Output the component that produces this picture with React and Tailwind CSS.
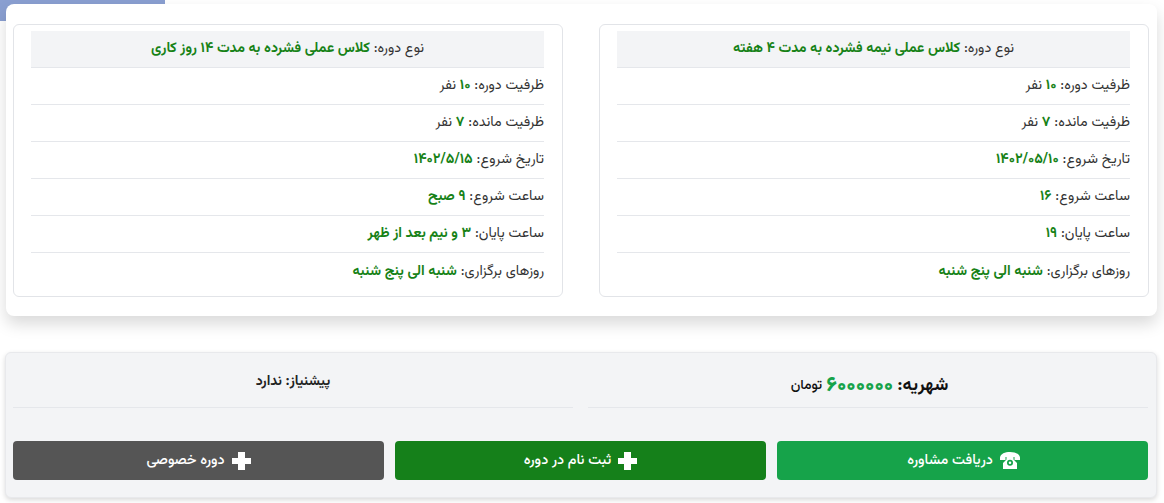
import React from "react";

const FONT = "font-['Vazirmatn','Noto_Sans_Arabic','DejaVu_Sans',sans-serif]";

const courses = [
  {
    type: "کلاس عملی نیمه فشرده به مدت ۴ هفته",
    rows: [
      ["ظرفیت دوره:", "۱۰", " نفر"],
      ["ظرفیت مانده:", "۷", " نفر"],
      ["تاریخ شروع:", "۱۴۰۲/۰۵/۱۰", ""],
      ["ساعت شروع:", "۱۶", ""],
      ["ساعت پایان:", "۱۹", ""],
      ["روزهای برگزاری:", "شنبه الی پنج شنبه", ""],
    ],
  },
  {
    type: "کلاس عملی فشرده به مدت ۱۴ روز کاری",
    rows: [
      ["ظرفیت دوره:", "۱۰", " نفر"],
      ["ظرفیت مانده:", "۷", " نفر"],
      ["تاریخ شروع:", "۱۴۰۲/۵/۱۵", ""],
      ["ساعت شروع:", "۹ صبح", ""],
      ["ساعت پایان:", "۳ و نیم بعد از ظهر", ""],
      ["روزهای برگزاری:", "شنبه الی پنج شنبه", ""],
    ],
  },
];

const PlusIcon = () => (
  <svg viewBox="0 0 19 18" className="w-[19px] h-[18px] fill-white">
    <path d="M6 0h7v6h6v6h-6v6H6v-6H0V6h6z" />
  </svg>
);

const PhoneIcon = () => (
  <svg viewBox="0 0 20 17" className="w-5 h-[17px] fill-white">
    <path d="M0 5.500C0.500 1.800 5 0 10 0s9.500 1.800 10 5.500V8h-5.500V5H5.500v3H0z" />
    <path
      fillRule="evenodd"
      d="M6.500 5h7v2.500L17 11v6H3v-6l3.500-3.500zM10 7.800a3 3 0 1 0 0 6 3 3 0 0 0 0-6zm0 1.700a1.300 1.300 0 1 1 0 2.600 1.300 1.300 0 0 1 0-2.600z"
    />
  </svg>
);

function CourseCard({ course }) {
  return (
    <div className="w-[550px] h-[273px] border border-[#e2e4e8] rounded-md pl-[17px] pr-[18px] pt-[6px] bg-white">
      <div className="h-[37px] flex items-center justify-center bg-[#f3f4f6] border-b border-[#e5e7eb] text-[14.2px] text-[#333]">
        <span>
          نوع دوره: <b className="text-[#178217] font-bold">{course.type}</b>
        </span>
      </div>
      {course.rows.map((row, i) => (
        <div
          key={i}
          className={
            i < 5
              ? "h-[37px] flex items-center border-b border-[#e5e7eb] text-[14.2px] text-[#333]"
              : "h-[37px] flex items-center text-[14.2px] text-[#333]"
          }
        >
          <span>
            {row[0]} <b className="text-[#178217] font-bold">{row[1]}</b>
            {row[2]}
          </span>
        </div>
      ))}
    </div>
  );
}

export default function App() {
  return (
    <div dir="rtl" className={`${FONT} relative w-[1164px] h-[503px] overflow-hidden bg-white`}>
      {/* blue tab peeking out behind the card */}
      <div className="absolute left-0 top-0 w-[165px] h-[21px] bg-[#8a9fd1] rounded-br-[14px]" />

      <div className="relative mt-[4px] mr-[7px] w-[1151px] h-[312px] bg-white rounded-lg shadow-[0_8px_16px_rgba(0,0,0,0.15)] pt-[20px] pr-[8px] pl-[7px]">
        <div className="flex justify-between">
          {courses.map((c, i) => (
            <CourseCard key={i} course={c} />
          ))}
        </div>
      </div>

      <div className="mt-[36px] mr-[7px] w-[1152px] h-[146px] bg-[#f3f4f6] border border-[#e8e9ec] rounded-md shadow-[0_2px_5px_rgba(0,0,0,0.15)] pl-[7px] pr-[8px]">
        <div className="flex justify-between">
          <div className="w-[560px] h-[55px] border-b border-[#e5e7eb] flex items-center justify-center gap-1 text-[#111] pt-[12px] pl-[3px]">
            <span className="text-[18px] font-bold">شهریه:</span>
            <span className="text-[21px] font-extrabold text-[#16a34a]">۶۰۰۰۰۰۰</span>
            <span className="text-[14px] font-medium">تومان</span>
          </div>
          <div className="w-[560px] h-[55px] border-b border-[#e5e7eb] flex items-center justify-center pt-[4px] text-[14px] font-bold text-[#222]">
            پیشنیاز: ندارد
          </div>
        </div>
        <div className="flex justify-between mt-[33px]">
          <button className="w-[371px] h-[39px] rounded-[4px] bg-[#16a34a] text-white text-[14.4px] font-medium flex items-center justify-center gap-[7px] pl-[2px]">
            <PhoneIcon />
            دریافت مشاوره
          </button>
          <button className="w-[371px] h-[39px] rounded-[4px] bg-[#15801a] text-white text-[14.4px] font-medium flex items-center justify-center gap-[7px]">
            <PlusIcon />
            ثبت نام در دوره
          </button>
          <button className="w-[371px] h-[39px] rounded-[4px] bg-[#555555] text-white text-[14.4px] font-medium flex items-center justify-center gap-[7px]">
            <PlusIcon />
            دوره خصوصی
          </button>
        </div>
      </div>
    </div>
  );
}
